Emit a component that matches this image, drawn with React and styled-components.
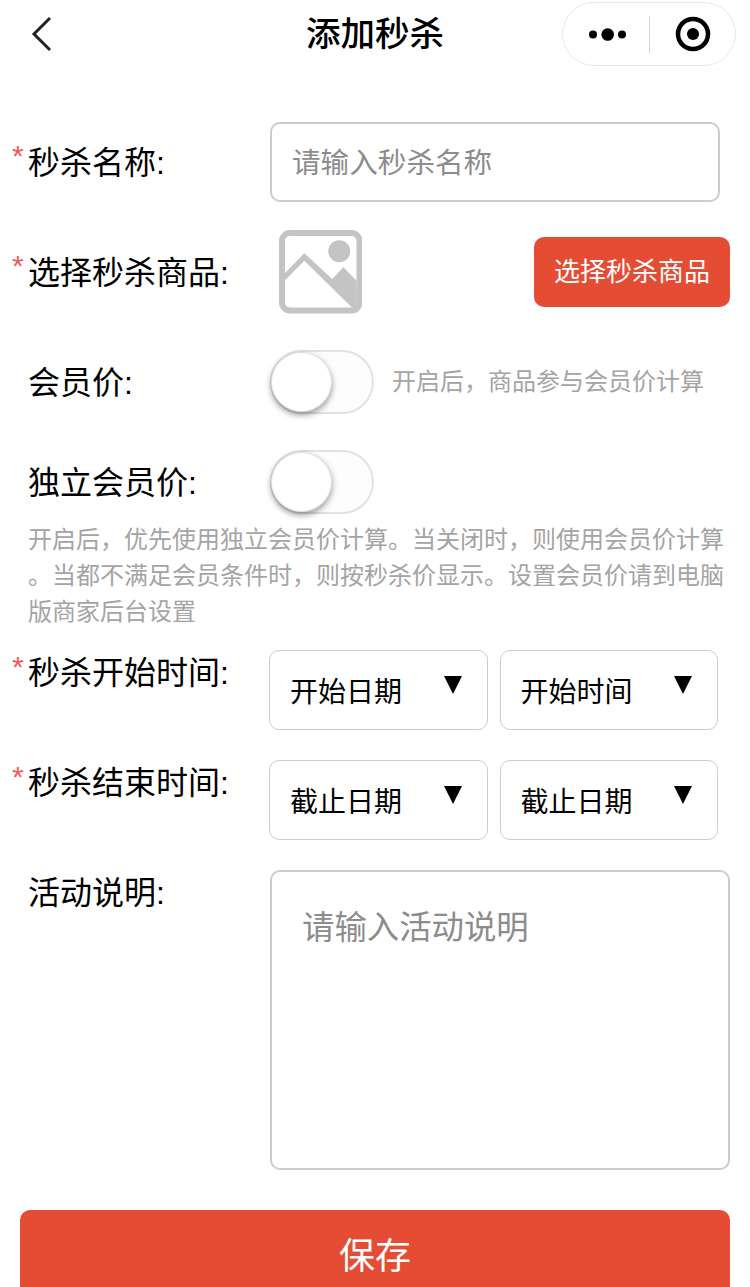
import styled, { createGlobalStyle } from "styled-components";

const GlobalStyle = createGlobalStyle`
  html, body {
    margin: 0;
    padding: 0;
    background: #fff;
    overflow: hidden;
  }
  body {
    font-family: "Liberation Sans", "Noto Sans CJK SC", sans-serif;
    color: #000;
  }
  * {
    box-sizing: border-box;
  }
`;

function Switch() {
  return (
    <Track>
      <Knob />
    </Track>
  );
}

function Picker({ text }) {
  return (
    <PickerBox>
      <PickerText>{text}</PickerText>
      <Arrow>
        <svg width="18" height="18" viewBox="0 0 18 18">
          <path d="M0 0h18L9 18z" fill="#000" />
        </svg>
      </Arrow>
    </PickerBox>
  );
}

function App() {
  return (
    <Page>
      <GlobalStyle />
      <Nav>
        <Back>
          <svg width="24" height="36" viewBox="0 0 24 36">
            <path d="M22 2L6 18l16 16" fill="none" stroke="#222" strokeWidth="3" />
          </svg>
        </Back>
        <Title>添加秒杀</Title>
        <CapsuleWrap>
          <Capsule>
            <svg width="40" height="16" viewBox="0 0 40 16">
              <circle cx="4" cy="8.5" r="4" fill="#000" />
              <circle cx="18.7" cy="8.5" r="6.3" fill="#000" />
              <circle cx="33" cy="8.5" r="4" fill="#000" />
            </svg>
            <CapsuleLine />
            <svg width="38" height="38" viewBox="0 0 38 38">
              <circle cx="19" cy="19" r="15" fill="none" stroke="#000" strokeWidth="4.5" />
              <circle cx="19" cy="19" r="6" fill="#000" />
            </svg>
          </Capsule>
        </CapsuleWrap>
      </Nav>

      <Form>
        <NameRow>
          <Label $required>秒杀名称:</Label>
          <NameInput>请输入秒杀名称</NameInput>
        </NameRow>

        <GoodsRow>
          <Label $required>选择秒杀商品:</Label>
          <GoodsImage>
            <svg width="83.5" height="83.5" viewBox="0 0 83.5 83.5">
              <rect x="3" y="3" width="77.5" height="77.5" rx="8" fill="none" stroke="#c4c4c4" strokeWidth="6" />
              <circle cx="60.3" cy="21.3" r="11" fill="#c4c4c4" />
              <path d="M5 44L25.3 23.3 53.3 49 64.3 37.3 77.7 50.7V77.3H72.7L25.3 30.7 5 51.3Z" fill="#c4c4c4" />
            </svg>
          </GoodsImage>
          <SelectButton>选择秒杀商品</SelectButton>
        </GoodsRow>

        <SwitchRow>
          <Label>会员价:</Label>
          <Switch />
          <InlineHint>开启后，商品参与会员价计算</InlineHint>
        </SwitchRow>

        <SwitchRow>
          <Label>独立会员价:</Label>
          <Switch />
        </SwitchRow>

        <Hint>开启后，优先使用独立会员价计算。当关闭时，则使用会员价计算。当都不满足会员条件时，则按秒杀价显示。设置会员价请到电脑版商家后台设置</Hint>

        <TimeRow>
          <TimeLabel $required>秒杀开始时间:</TimeLabel>
          <Pickers>
            <Picker text="开始日期" />
            <Picker text="开始时间" />
          </Pickers>
        </TimeRow>

        <TimeRow $second>
          <TimeLabel $required>秒杀结束时间:</TimeLabel>
          <Pickers>
            <Picker text="截止日期" />
            <Picker text="截止日期" />
          </Pickers>
        </TimeRow>

        <DescRow>
          <DescLabel>活动说明:</DescLabel>
          <DescBox>请输入活动说明</DescBox>
        </DescRow>
      </Form>

      <SaveButton>保存</SaveButton>
    </Page>
  );
}

const Page = styled.div`
  width: 750px;
  height: 1287px;
  overflow: hidden;
`;

const Nav = styled.div`
  display: grid;
  grid-template-columns: 1fr auto 1fr;
  align-items: center;
  height: 68px;
`;

const Back = styled.div`
  display: flex;
  padding-left: 28px;
  svg {
    display: block;
  }
`;

const Title = styled.div`
  font-size: 34.5px;
  font-weight: 500;
  line-height: 68px;
`;

const CapsuleWrap = styled.div`
  display: flex;
  justify-content: flex-end;
  padding-right: 14px;
`;

const Capsule = styled.div`
  width: 174px;
  height: 64px;
  border: 1px solid #e8e8e8;
  border-radius: 32px;
  display: flex;
  align-items: center;
  padding-left: 26px;
  svg {
    display: block;
  }
`;

const CapsuleLine = styled.div`
  width: 1px;
  height: 37px;
  background: #d0d0d0;
  margin: 0 24px 0 20px;
`;

const Form = styled.div`
  padding: 54px 0 0 28px;
`;

const Label = styled.div`
  width: 242px;
  flex-shrink: 0;
  padding-top: 2px;
  font-size: 32px;
  line-height: 44px;
  position: relative;
  &::before {
    content: ${(p) => (p.$required ? '"*"' : "none")};
    position: absolute;
    left: -16px;
    top: -5px;
    color: #f25b5b;
    font-size: 30px;
    line-height: 44px;
  }
`;

const NameRow = styled.div`
  display: flex;
  align-items: center;
  height: 80px;
`;

const NameInput = styled.div`
  width: 450px;
  height: 80px;
  border: 2px solid #ccc;
  border-radius: 10px;
  padding-left: 20px;
  font-size: 28.6px;
  line-height: 78px;
  color: #8c8c8c;
`;

const GoodsRow = styled.div`
  display: flex;
  align-items: center;
  height: 84px;
  margin-top: 28px;
`;

const GoodsImage = styled.div`
  width: 84px;
  height: 84px;
  margin-left: 8.5px;
  svg {
    display: block;
  }
`;

const SelectButton = styled.div`
  width: 196px;
  height: 70px;
  margin-left: 171.5px;
  background: #e44d33;
  border-radius: 10px;
  color: #fff;
  font-size: 26px;
  line-height: 70px;
  text-align: center;
`;

const SwitchRow = styled.div`
  display: flex;
  align-items: center;
  height: 64px;
  margin-top: 36px;
`;

const Track = styled.div`
  width: 104px;
  height: 64px;
  flex-shrink: 0;
  border: 2px solid #e2e2e2;
  border-radius: 32px;
  background: #fdfdfd;
  position: relative;
`;

const Knob = styled.div`
  position: absolute;
  left: -1px;
  top: 0;
  width: 61px;
  height: 60px;
  border-radius: 50%;
  background: #fff;
  border: 1px solid #e0e0e0;
  box-shadow: 0 3px 6px rgba(0, 0, 0, 0.4);
`;

const InlineHint = styled.div`
  margin-left: 18px;
  padding-bottom: 6px;
  font-size: 24px;
  color: #a4a4a4;
  white-space: nowrap;
`;

const Hint = styled.div`
  width: 700px;
  margin-top: 8px;
  font-size: 24px;
  line-height: 36px;
  color: #a4a4a4;
  line-break: anywhere;
`;

const TimeRow = styled.div`
  display: flex;
  align-items: flex-start;
  margin-top: ${(p) => (p.$second ? "30px" : "20px")};
`;

const TimeLabel = styled(Label)`
  width: 241px;
  padding-top: 1px;
`;

const Pickers = styled.div`
  display: flex;
  gap: 12px;
`;

const PickerBox = styled.div`
  width: 218.5px;
  height: 80px;
  border: 1px solid #ccc;
  border-radius: 10px;
  padding-left: 20px;
  position: relative;
  font-size: 28px;
  line-height: 84px;
`;

const PickerText = styled.span`
  color: #000;
`;

const Arrow = styled.span`
  position: absolute;
  right: 25px;
  top: 25px;
  svg {
    display: block;
  }
`;

const DescRow = styled.div`
  display: flex;
  align-items: flex-start;
  margin-top: 30px;
`;

const DescLabel = styled(Label)`
  padding-top: 1px;
`;

const DescBox = styled.div`
  width: 460px;
  height: 300px;
  border: 2px solid #ccc;
  border-radius: 10px;
  padding: 34px 0 0 30px;
  font-size: 32.4px;
  line-height: 44px;
  color: #8c8c8c;
`;

const SaveButton = styled.div`
  width: 710px;
  height: 90px;
  margin: 40px 0 0 20px;
  background: #e44d33;
  border-radius: 10px;
  color: #fff;
  font-size: 36px;
  line-height: 94px;
  text-align: center;
`;

export default App;
